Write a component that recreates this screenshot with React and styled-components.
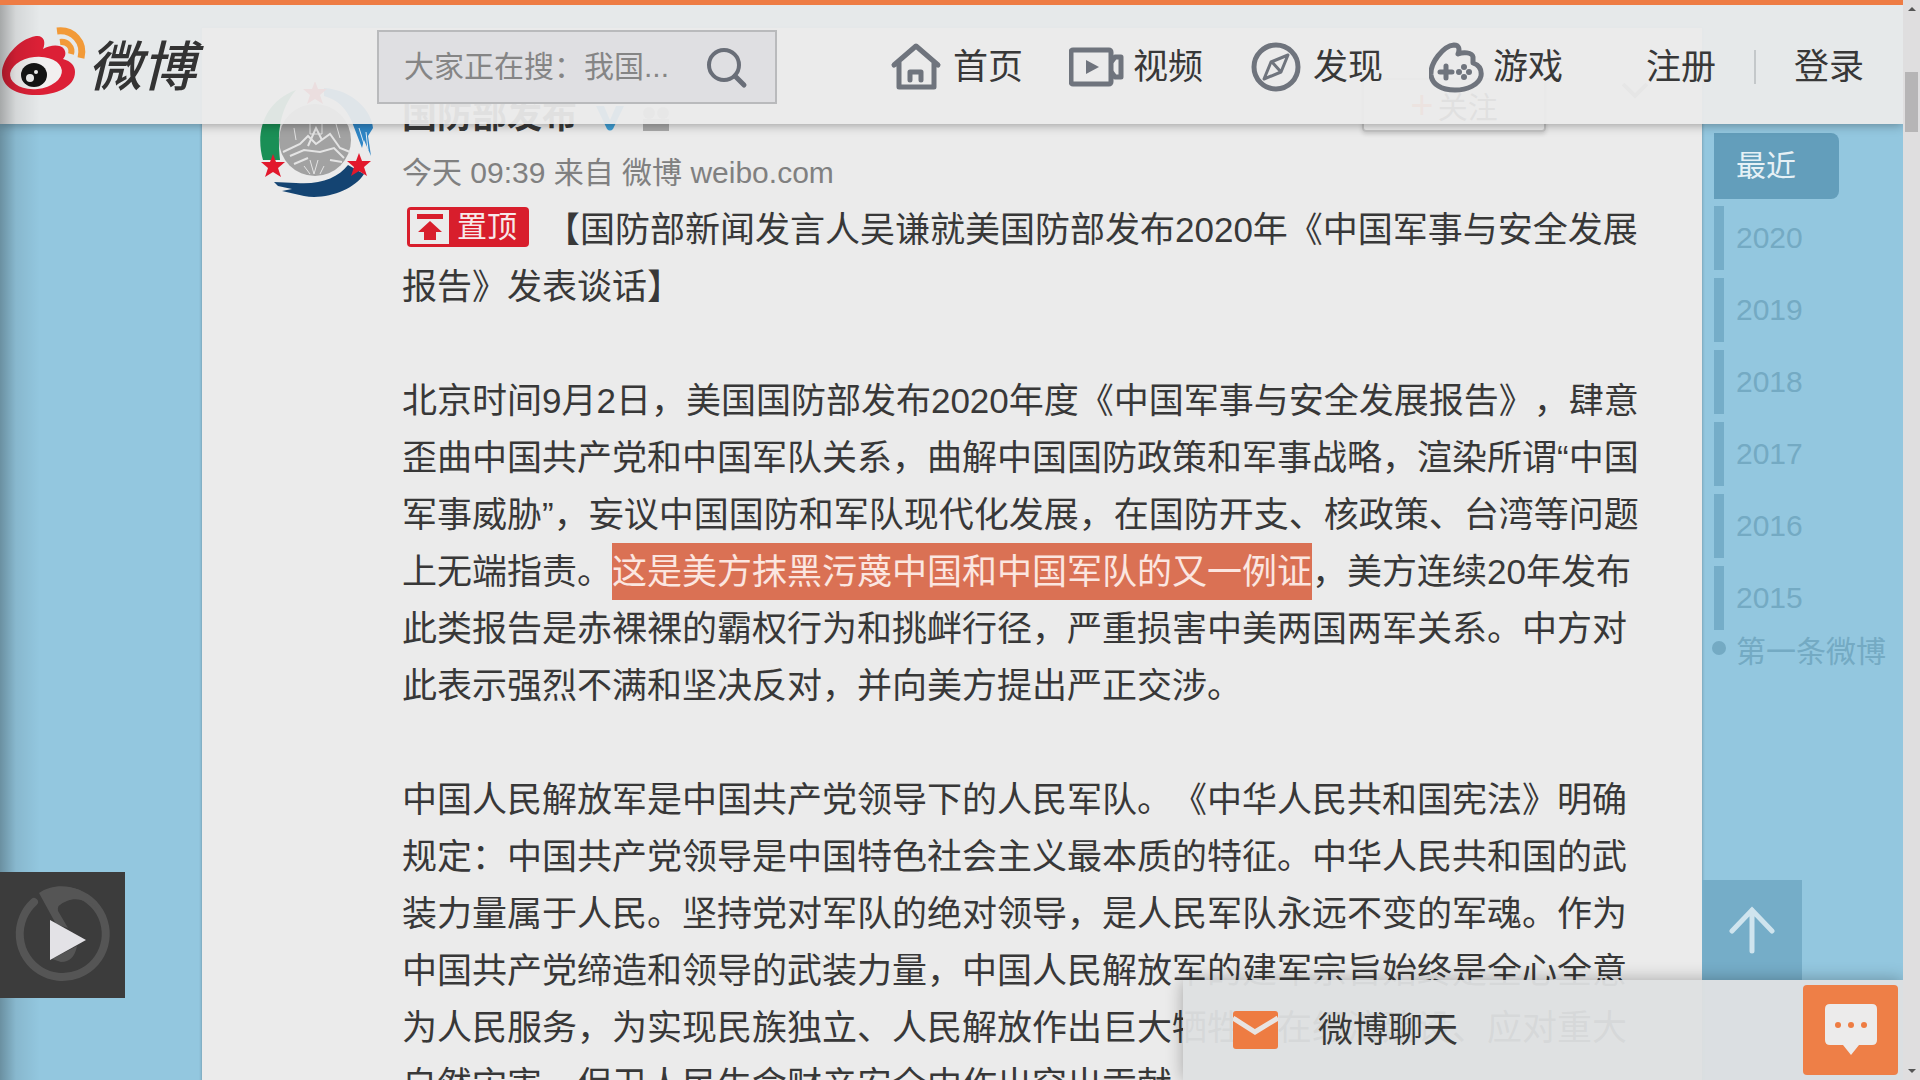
import styled, { createGlobalStyle } from "styled-components";

const years = ["2020", "2019", "2018", "2017", "2016", "2015"];

const App = () => {
    return (
        <Shell>
            <GlobalStyle />
            <Main>
                <Header>
                    <Logo href="#" aria-label="微博">
                        <WeiboEye />
                        <Wordmark>微博</Wordmark>
                    </Logo>
                    <Search>
                        <SearchInput type="text" aria-label="搜索" placeholder="大家正在搜：我国..." />
                        <SearchButton type="button" aria-label="搜索">
                            <svg width="44" height="44" viewBox="0 0 44 44" fill="none" stroke="#696e78">
                                <circle cx="20" cy="20" r="15" strokeWidth="4" />
                                <path d="M31 31l9 9" strokeWidth="5" strokeLinecap="round" />
                            </svg>
                        </SearchButton>
                    </Search>
                    <Nav>
                        <NavLink href="#"><HomeIcon />首页</NavLink>
                        <NavLink href="#"><VideoIcon />视频</NavLink>
                        <NavLink href="#"><CompassIcon />发现</NavLink>
                        <NavLink href="#"><GameIcon />游戏</NavLink>
                    </Nav>
                    <Account>
                        <NavLink href="#">注册</NavLink>
                        <Divider />
                        <NavLink href="#">登录</NavLink>
                    </Account>
                </Header>

                <Page>
                    <Card>
                        <Avatar href="#" aria-label="国防部发布">
                            <Emblem />
                        </Avatar>
                        <Post>
                            <PostHead>
                                <Name href="#">国防部发布</Name>
                                <Verified />
                                <Crown />
                                <Follow type="button"><Plus>+</Plus>关注</Follow>
                                <More type="button" aria-label="更多">
                                    <svg width="26" height="16" viewBox="0 0 26 16" fill="none" stroke="#999" strokeWidth="4">
                                        <path d="M1 1l12 12L25 1" />
                                    </svg>
                                </More>
                            </PostHead>
                            <Meta>
                                今天 09:39 来自 微博 weibo.com
                            </Meta>
                            <Text>
                                <Pin>
                                    <PinArrow>
                                        <svg width="26" height="28" viewBox="0 0 26 28" fill="#d81e2c">
                                            <path d="M0 1h26v5H0zM13 8l12 11h-6v8H7v-8H1z" />
                                        </svg>
                                    </PinArrow>
                                    置顶
                                </Pin>
                                【国防部新闻发言人吴谦就美国防部发布2020年《中国军事与安全发展报告》发表谈话】
                            </Text>
                            <Text>
                                北京时间9月2日，美国国防部发布2020年度《中国军事与安全发展报告》，肆意歪曲中国共产党和中国军队关系，曲解中国国防政策和军事战略，渲染所谓“中国军事威胁”，妄议中国国防和军队现代化发展，在国防开支、核政策、台湾等问题上无端指责。<Selected>这是美方抹黑污蔑中国和中国军队的又一例证</Selected>，美方连续20年发布此类报告是赤裸裸的霸权行为和挑衅行径，严重损害中美两国两军关系。中方对此表示强烈不满和坚决反对，并向美方提出严正交涉。
                            </Text>
                            <Text>
                                中国人民解放军是中国共产党领导下的人民军队。《中华人民共和国宪法》明确规定：中国共产党领导是中国特色社会主义最本质的特征。中华人民共和国的武装力量属于人民。坚持党对军队的绝对领导，是人民军队永远不变的军魂。作为中国共产党缔造和领导的武装力量，中国人民解放军的建军宗旨始终是全心全意为人民服务，为实现民族独立、人民解放作出巨大牺牲，在经济建设、应对重大自然灾害、保卫人民生命财产安全中作出突出贡献
                            </Text>
                        </Post>
                    </Card>
                    <Timeline>
                        <Current href="#">最近</Current>
                        {years.map((year) => (
                            <Year href="#" key={year}>{year}</Year>
                        ))}
                        <First href="#"><Dot />第一条微博</First>
                    </Timeline>
                </Page>

                <BackTop type="button" aria-label="返回顶部">
                    <svg width="46" height="48" viewBox="0 0 46 48" fill="none" stroke="#cfe4ee" strokeWidth="5" strokeLinecap="round">
                        <path d="M23 4v41M3 25L23 4l20 21" />
                    </svg>
                </BackTop>
                <EdgeShade />
                <Player type="button" aria-label="播放">
                    <svg width="125" height="126" viewBox="0 0 125 126">
                        <path d="M34 30A43 43 0 1 0 62 19" fill="none" stroke="#555" strokeWidth="8" strokeLinecap="round" />
                        <path d="M39 21C50 13 66 12 80 18L98 38C88 28 76 25 67 29Q56 33 58 39L68 56L56 52Z" fill="#555" />
                        <path d="M52 87L77 74Q74 90 61 90Z" fill="#555" />
                        <path d="M50 48L86 68L50 88Z" fill="#e3e2e6" />
                    </svg>
                </Player>
                <Chat>
                    <svg width="45" height="38" viewBox="0 0 45 38">
                        <rect width="45" height="38" rx="3" fill="#ee7c42" />
                        <path d="M0 7L22 21L45 7" fill="none" stroke="#e8e4e2" strokeWidth="5" />
                    </svg>
                    <ChatLabel>微博聊天</ChatLabel>
                    <ChatButton type="button" aria-label="消息">
                        <svg width="52" height="52" viewBox="0 0 52 52">
                            <path d="M5 0H47Q52 0 52 5V36Q52 41 47 41H34L26 51L18 41H5Q0 41 0 36V5Q0 0 5 0Z" fill="#ecebeb" />
                            <g fill="#ee7c42">
                                <circle cx="13" cy="21" r="3" />
                                <circle cx="26" cy="21" r="3" />
                                <circle cx="39" cy="21" r="3" />
                            </g>
                        </svg>
                    </ChatButton>
                </Chat>
            </Main>
            <Scroll>
                <Arrow viewBox="0 0 8 6"><path d="M0 5L4 1L8 5Z" /></Arrow>
                <Thumb />
                <Arrow viewBox="0 0 8 6"><path d="M0 1L4 5L8 1Z" /></Arrow>
            </Scroll>
        </Shell>
    );
}

export default App;


const WeiboEye = () => (
    <svg width="88" height="92" viewBox="0 20 88 92">
        <path d="M2 72C2 58 18 38 36 35C44 34 46 41 43 48C50 44 60 43 64 48C66 51 66 55 63 58C71 60 75 65 75 71C75 86 56 94 36 94C16 94 2 86 2 72Z" fill="#dc2036" />
        <ellipse cx="36" cy="72" rx="26" ry="16" transform="rotate(-6 36 72)" fill="#f1efef" />
        <ellipse cx="34" cy="74" rx="13" ry="12" fill="#141414" />
        <circle cx="30" cy="77" r="4" fill="#eee" />
        <circle cx="36" cy="71" r="2" fill="#eee" />
        <path d="M57 30C73 28 85 41 81 57" fill="none" stroke="#f29a38" strokeWidth="7" />
        <path d="M60 41C67 40 73 46 71 53" fill="none" stroke="#f29a38" strokeWidth="6" />
    </svg>
)

const HomeIcon = () => (
    <Icon viewBox="0 0 56 52" strokeWidth="5">
        <path d="M5 24L27 5L49 24M10 21V46H45V21" />
        <path d="M21 39V31H32V39" />
    </Icon>
)

const VideoIcon = () => (
    <Icon viewBox="0 0 56 52" strokeWidth="5">
        <rect x="2" y="9" width="40" height="34" rx="2" />
        <path d="M43 20L46 16H52V36H46L43 32" />
        <path d="M17 19L30 26L17 33Z" fill="#6f747d" stroke="none" />
    </Icon>
)

const CompassIcon = () => (
    <Icon viewBox="0 0 56 52" strokeWidth="5">
        <circle cx="27" cy="26" r="22" />
        <path d="M39 14L32 31L15 38L22 21ZM23 21L32 31" strokeWidth="3" />
    </Icon>
)

const GameIcon = () => (
    <Icon viewBox="0 0 56 52" strokeWidth="5">
        <path d="M2 34C1 22 14 5 25 4C30 4 31 8 29 13C34 11 43 11 44 16V22C50 24 53 28 52 35C50 44 38 49 26 49C12 49 3 43 2 34Z" />
        <path d="M11 31H23M17 25V37" />
        <g fill="#6f747d" stroke="none">
            <circle cx="35" cy="26" r="3" />
            <circle cx="35" cy="36" r="3" />
            <circle cx="30" cy="31" r="3" />
            <circle cx="40" cy="31" r="3" />
        </g>
    </Icon>
)

const star = "M0 -12L3 -4L12 -4L5 2L8 11L0 6L-8 11L-5 2L-12 -4L-3 -4Z"

const Emblem = () => (
    <svg width="114" height="116" viewBox="0 0 114 116">
        <path d="M3 78C-5 50 4 20 36 8C24 22 16 42 20 78Z" fill="#1a8f56" />
        <path d="M64 6C94 8 112 30 113 46L108 54L111 74L104 58L102 66L92 40C86 26 78 18 64 14Z" fill="#2f86c6" />
        <path d="M14 100L36 101C60 103 78 96 88 83L104 92C94 108 66 118 44 114L22 109L32 107L18 104Z" fill="#144472" />
        <path d="M106 50L108 68M99 46L104 62" stroke="#e4eef5" strokeWidth="1" />
        <circle cx="55" cy="58" r="36" fill="#a2a2a2" />
        <g fill="none" stroke="#e4e4e4">
            <path d="M23 70L40 62L48 54L56 62L70 52L80 66L90 70" strokeWidth="2" />
            <path d="M30 74L44 68L60 70L74 66L84 76M34 82L48 76M70 78L82 80M48 64L56 46L62 58" strokeWidth="2" />
            <path d="M34 46L36 58M76 42L80 56M50 78L54 92L58 78M44 84L50 92M64 84L60 92M50 40V52H62V42" />
        </g>
        <g fill="#e2182c">
            <path d={star} transform="translate(55 11)" />
            <path d={star} transform="translate(13 84)" />
            <path d={star} transform="translate(99 83)" />
        </g>
    </svg>
)

const Verified = () => (
    <svg width="30" height="26" viewBox="0 0 30 26">
        <path d="M1 1H9L15 15L21 1H29L18 24Q15 27 12 24Z" fill="#3f9fd6" />
    </svg>
)

const Crown = () => (
    <svg width="26" height="26" viewBox="0 0 26 26" fill="#aaa">
        <circle cx="6" cy="8" r="6" />
        <circle cx="20" cy="8" r="6" />
        <rect y="14" width="26" height="12" />
    </svg>
)

const GlobalStyle = createGlobalStyle`
    * {
        box-sizing: border-box;
    }

    body {
        margin: 0;
        overflow: hidden;
        color: #383838;
        font-family: "Liberation Sans", "Noto Sans CJK SC", sans-serif;
        text-spacing-trim: space-all;
    }

    a {
        color: inherit;
        text-decoration: none;
    }

    button, input {
        padding: 0;
        border: 0;
        background: none;
        color: inherit;
        font: inherit;
    }

    svg {
        display: block;
        flex-shrink: 0;
    }
`

const Shell = styled.div`
    display: grid;
    grid-template-columns: 1fr 17px;
    height: 100vh;
`

const Main = styled.div`
    position: relative;
    overflow: hidden;
    background: #93c7df;
`

const Header = styled.header`
    position: absolute;
    z-index: 2;
    top: 0;
    left: 0;
    right: 0;
    display: flex;
    align-items: center;
    height: 124px;
    padding: 4px 39px 0 0;
    border-top: 5px solid #ee7c44;
    background: rgba(235, 235, 235, 0.94);
    box-shadow: 0 1px 10px rgba(0, 0, 0, 0.35);
`

const Logo = styled.a`
    display: flex;
    align-items: center;
    width: 377px;
`

const Wordmark = styled.span`
    font-size: 54px;
    line-height: 76px;
    font-style: italic;
    font-weight: 500;
    color: #333;
`

const Search = styled.form`
    display: flex;
    align-items: center;
    width: 400px;
    height: 74px;
    padding: 0 25px;
    border: 2px solid #b9babc;
    background: #dfdfe2;
`

const SearchInput = styled.input`
    flex: 1;
    min-width: 0;
    outline: none;
    font-size: 30px;

    &::placeholder {
        color: #858585;
    }
`

const SearchButton = styled.button`
    margin-right: 2px;
`

const Nav = styled.nav`
    display: flex;
    gap: 46px;
    margin-left: auto;
`

const NavLink = styled.a`
    display: flex;
    align-items: center;
    gap: 8px;
    font-size: 35px;
    line-height: 52px;
    white-space: nowrap;
`

const Icon = styled.svg`
    width: 56px;
    height: 52px;
    fill: none;
    stroke: #6f747d;
    stroke-linecap: round;
    stroke-linejoin: round;
`

const Account = styled.div`
    display: flex;
    align-items: center;
    gap: 38px;
    margin-left: 83px;
`

const Divider = styled.span`
    width: 2px;
    height: 34px;
    background: #c4c8ca;
`

const Page = styled.div`
    display: grid;
    grid-template-columns: 202px 1fr 201px;
    height: 100%;
    padding-top: 28px;
`

const Card = styled.article`
    grid-column: 2;
    display: flex;
    gap: 28px;
    padding: 50px 60px 0 58px;
    background: #ebebeb;
    box-shadow: 0 0 3px rgba(0, 0, 0, 0.3);
`

const Avatar = styled.a`
    padding-top: 4px;
`

const Post = styled.div`
    flex: 1;
    min-width: 0;
`

const PostHead = styled.div`
    display: flex;
    align-items: flex-end;
    height: 66px;

    > svg {
        margin: 0 0 13px 18px;
    }
`

const Name = styled.a`
    font-size: 35px;
    line-height: 57px;
    font-weight: 700;
`

const Follow = styled.button`
    display: flex;
    align-self: flex-start;
    align-items: center;
    justify-content: center;
    gap: 4px;
    width: 184px;
    height: 54px;
    margin: 0 76px 0 auto;
    border: 2px solid #c4c4c4;
    border-radius: 4px;
    font-size: 30px;
    box-shadow: 0 2px 4px rgba(0, 0, 0, 0.15);
`

const Plus = styled.span`
    font-size: 40px;
    line-height: 40px;
    color: #f26d3c;
`

const More = styled.button`
    align-self: flex-start;
    margin-right: -6px;
    padding-top: 5px;
`

const Meta = styled.p`
    margin: 0;
    font-size: 30px;
    line-height: 57px;
    color: #808080;
`

const Text = styled.p`
    margin: 0 0 57px;
    font-size: 35px;
    line-height: 57px;
`

const Selected = styled.mark`
    display: inline-block;
    background: #da7154;
    color: #fbe6e0;
`

const Pin = styled.span`
    display: inline-flex;
    align-items: center;
    gap: 8px;
    width: 122px;
    height: 40px;
    margin: 0 16px 11px 5px;
    padding-left: 3px;
    border-radius: 4px;
    background: #d81e2c;
    color: #f7e9e9;
    font-size: 30px;
    line-height: 40px;
    vertical-align: bottom;
    white-space: nowrap;
`

const PinArrow = styled.span`
    display: flex;
    align-items: center;
    justify-content: center;
    width: 39px;
    height: 34px;
    background: #ebebeb;
`

const Timeline = styled.nav`
    display: flex;
    flex-direction: column;
    padding: 105px 0 0 12px;
    font-size: 30px;
    color: #74aac3;
`

const Current = styled.a`
    width: 125px;
    margin-bottom: 7px;
    padding-left: 22px;
    border-radius: 0 8px 8px 0;
    background: #639ebb;
    color: #e6f1f6;
    line-height: 66px;
`

const Year = styled.a`
    margin-bottom: 8px;
    padding-left: 12px;
    border-left: 10px solid #75adc8;
    line-height: 64px;

    &:nth-last-child(2) {
        margin-bottom: 0;
    }
`

const First = styled.a`
    display: flex;
    align-items: flex-start;
    gap: 10px;
    margin-left: -2px;
    line-height: 44px;
    white-space: nowrap;
`

const Dot = styled.span`
    width: 14px;
    height: 14px;
    margin-top: 11px;
    border-radius: 50%;
    background: #74aac3;
`

const BackTop = styled.button`
    position: absolute;
    right: 101px;
    bottom: 100px;
    display: grid;
    place-items: center;
    width: 100px;
    height: 100px;
    background: #75adc8;
`

const EdgeShade = styled.div`
    position: absolute;
    z-index: 3;
    top: 5px;
    bottom: 0;
    left: 0;
    width: 40px;
    background: linear-gradient(to right, rgba(0, 0, 0, 0.28), rgba(0, 0, 0, 0.08) 40%, transparent);
    pointer-events: none;
`

const Player = styled.button`
    position: absolute;
    z-index: 4;
    left: 0;
    bottom: 82px;
    background: #3c3c3c;
`

const Chat = styled.aside`
    position: absolute;
    right: 0;
    bottom: 0;
    display: flex;
    align-items: center;
    width: 720px;
    height: 100px;
    padding: 0 5px 0 50px;
    background: rgba(222, 224, 226, 0.95);
    box-shadow: 0 0 16px rgba(0, 0, 0, 0.3);
`

const ChatLabel = styled.span`
    margin-left: 40px;
    font-size: 35px;
    line-height: 48px;
`

const ChatButton = styled.button`
    display: grid;
    place-items: center;
    width: 95px;
    height: 90px;
    margin-left: auto;
    border-radius: 4px;
    background: #ee7f47;
`

const Scroll = styled.div`
    display: flex;
    flex-direction: column;
    align-items: center;
    padding: 6px 0;
    background: #dfdedf;
`

const Arrow = styled.svg`
    width: 8px;
    height: 6px;
    fill: #555;
`

const Thumb = styled.div`
    width: 13px;
    height: 60px;
    margin: 60px 0 auto;
    background: #b6b5b6;
`
